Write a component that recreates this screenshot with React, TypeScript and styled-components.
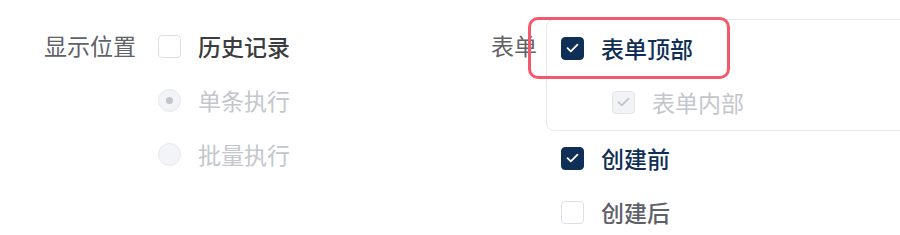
import React from 'react'
import styled, { createGlobalStyle, css } from 'styled-components'

const GlobalStyle = createGlobalStyle`
  html, body {
    margin: 0;
    padding: 0;
    background: #ffffff;
    overflow: hidden;
  }
  body {
    font-family: 'Noto Sans CJK SC', 'Noto Sans', sans-serif;
  }
`

const NAVY = '#102f57'

const StyledPage = styled.div`
  position: relative;
  display: flex;
  flex-direction: row;
  width: 900px;
  height: 235px;
  padding-top: 19px;
  box-sizing: border-box;
  overflow: hidden;
`

const StyledFormItem = styled.div<{ $width?: number; $indent: number; $gap: number }>`
  display: flex;
  flex-direction: row;
  align-items: flex-start;
  gap: ${({ $gap }) => $gap}px;
  padding-left: ${({ $indent }) => $indent}px;
  box-sizing: border-box;
  ${({ $width }) => ($width ? `width: ${$width}px; flex-shrink: 0;` : 'flex: 1;')}
`

const StyledLabel = styled.div`
  height: 54px;
  line-height: 54px;
  margin-top: -1px;
  font-size: 23px;
  color: #606266;
  white-space: nowrap;
`

const StyledControls = styled.div`
  display: flex;
  flex-direction: column;
`

const StyledCard = styled.div`
  width: 420px;
  padding: 1px 14px;
  border: 1px solid #e6e8ee;
  border-radius: 8px;
  display: flex;
  flex-direction: column;
`

const StyledRow = styled.div<{ $indent?: number }>`
  display: flex;
  align-items: center;
  height: 54px;
  gap: 17px;
  padding-left: ${({ $indent }) => $indent || 0}px;
`

type Tone = 'dark' | 'navy' | 'gray' | 'muted'

const toneColor: Record<Tone, string> = {
  dark: '#3a3c40',
  navy: NAVY,
  gray: '#5e6168',
  muted: '#c3c6cd',
}

const StyledText = styled.span<{ $tone: Tone }>`
  font-size: 23px;
  font-weight: ${({ $tone }) => ($tone === 'muted' ? 400 : 500)};
  color: ${({ $tone }) => toneColor[$tone]};
  white-space: nowrap;
`

const StyledBox = styled.span<{ $checked?: boolean; $disabled?: boolean }>`
  width: 23px;
  height: 23px;
  box-sizing: border-box;
  border-radius: 4px;
  border: 1.5px solid #dcdfe6;
  background: #ffffff;
  display: inline-flex;
  align-items: center;
  justify-content: center;
  flex-shrink: 0;
  ${({ $checked, $disabled }) =>
    $disabled
      ? css`
          background: #f2f3f6;
          border-color: #e2e4ea;
          color: #c0c4cc;
        `
      : $checked
        ? css`
            background: ${NAVY};
            border-color: ${NAVY};
            color: #ffffff;
          `
        : ''}
`

const StyledRadio = styled.span<{ $checked?: boolean }>`
  width: 23px;
  height: 23px;
  box-sizing: border-box;
  border-radius: 50%;
  border: 1.5px solid #e4e7ed;
  background: #f3f4f7;
  display: inline-flex;
  align-items: center;
  justify-content: center;
  flex-shrink: 0;
  &::after {
    content: '';
    width: 7px;
    height: 7px;
    border-radius: 50%;
    background: ${({ $checked }) => ($checked ? '#c0c4cc' : 'transparent')};
  }
`

const StyledHighlight = styled.div`
  position: absolute;
  left: 528px;
  top: 17px;
  width: 202px;
  height: 62px;
  box-sizing: border-box;
  border: 3px solid #f4586b;
  border-radius: 10px;
  pointer-events: none;
`

const Check = () => (
  <svg width="13" height="10" viewBox="0 0 13 10" fill="none">
    <path d="M1.5 5.2 L4.8 8.3 L11.5 1.6" stroke="currentColor" strokeWidth="1.8" strokeLinecap="round" strokeLinejoin="round" />
  </svg>
)

interface CheckboxProps {
  checked?: boolean
  disabled?: boolean
  label: string
  tone: Tone
  indent?: number
}

const Checkbox = ({ checked, disabled, label, tone, indent }: CheckboxProps) => (
  <StyledRow $indent={indent}>
    <StyledBox $checked={checked} $disabled={disabled}>
      {checked && <Check />}
    </StyledBox>
    <StyledText $tone={tone}>{label}</StyledText>
  </StyledRow>
)

const Radio = ({ checked, label }: { checked?: boolean; label: string }) => (
  <StyledRow>
    <StyledRadio $checked={checked} />
    <StyledText $tone="muted">{label}</StyledText>
  </StyledRow>
)

const App = () => (
  <>
    <GlobalStyle />
    <StyledPage>
      <StyledFormItem $width={491} $indent={44} $gap={22}>
        <StyledLabel>显示位置</StyledLabel>
        <StyledControls>
          <Checkbox label="历史记录" tone="dark" />
          <Radio checked label="单条执行" />
          <Radio label="批量执行" />
        </StyledControls>
      </StyledFormItem>

      <StyledFormItem $indent={0} $gap={9}>
        <StyledLabel>表单</StyledLabel>
        <StyledControls>
          <StyledCard>
            <Checkbox checked label="表单顶部" tone="navy" />
            <Checkbox checked disabled label="表单内部" tone="muted" indent={51} />
          </StyledCard>
          <Checkbox checked label="创建前" tone="navy" indent={15} />
          <Checkbox label="创建后" tone="gray" indent={15} />
        </StyledControls>
      </StyledFormItem>

      <StyledHighlight />
    </StyledPage>
  </>
)

export default App
